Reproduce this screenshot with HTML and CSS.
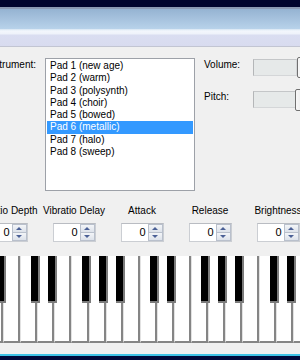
FILE: index.html
```html
<!DOCTYPE html>
<html lang="en">
<head>
    <meta charset="UTF-8">
    <title>Synth Pad</title>
    <link rel="stylesheet" href="styles.css">
</head>
<body>
    <div class="topbar"></div>
    <div class="caption"></div>
    <div class="menubar"></div>

    <div class="panel">
        <div class="top-row">
            <label class="field-label instrument-label">Instrument:</label>
            <ul class="listbox">
                <li>Pad 1 (new age)</li>
                <li>Pad 2 (warm)</li>
                <li>Pad 3 (polysynth)</li>
                <li>Pad 4 (choir)</li>
                <li>Pad 5 (bowed)</li>
                <li class="selected">Pad 6 (metallic)</li>
                <li>Pad 7 (halo)</li>
                <li>Pad 8 (sweep)</li>
            </ul>
            <div class="sliders">
                <div class="slider-row">
                    <span class="field-label">Volume:</span>
                    <div class="track"></div>
                    <div class="thumb"></div>
                </div>
                <div class="slider-row">
                    <span class="field-label">Pitch:</span>
                    <div class="track"></div>
                    <div class="thumb pitch"></div>
                </div>
            </div>
        </div>

        <div class="spin-row">
            <div class="spin-col">
                <span class="spin-label">Vibratio Depth</span>
                <div class="spinbox"><span class="spin-value">0</span><div class="spin-buttons"><span class="spin-up"></span><span class="spin-down"></span></div></div>
            </div>
            <div class="spin-col">
                <span class="spin-label">Vibratio Delay</span>
                <div class="spinbox"><span class="spin-value">0</span><div class="spin-buttons"><span class="spin-up"></span><span class="spin-down"></span></div></div>
            </div>
            <div class="spin-col">
                <span class="spin-label">Attack</span>
                <div class="spinbox"><span class="spin-value">0</span><div class="spin-buttons"><span class="spin-up"></span><span class="spin-down"></span></div></div>
            </div>
            <div class="spin-col">
                <span class="spin-label">Release</span>
                <div class="spinbox"><span class="spin-value">0</span><div class="spin-buttons"><span class="spin-up"></span><span class="spin-down"></span></div></div>
            </div>
            <div class="spin-col">
                <span class="spin-label">Brightness</span>
                <div class="spinbox"><span class="spin-value">0</span><div class="spin-buttons"><span class="spin-up"></span><span class="spin-down"></span></div></div>
            </div>
        </div>

        <!-- A B C D E F G A B C D E F G A B C D E -->
        <div class="keyboard">
            <div class="white-key"><i class="black-key"></i></div>
            <div class="white-key"></div>
            <div class="white-key"><i class="black-key"></i></div>
            <div class="white-key"><i class="black-key"></i></div>
            <div class="white-key"></div>
            <div class="white-key"><i class="black-key"></i></div>
            <div class="white-key"><i class="black-key"></i></div>
            <div class="white-key"><i class="black-key"></i></div>
            <div class="white-key"></div>
            <div class="white-key"><i class="black-key"></i></div>
            <div class="white-key"><i class="black-key"></i></div>
            <div class="white-key"></div>
            <div class="white-key"><i class="black-key"></i></div>
            <div class="white-key"><i class="black-key"></i></div>
            <div class="white-key"><i class="black-key"></i></div>
            <div class="white-key"></div>
            <div class="white-key"><i class="black-key"></i></div>
            <div class="white-key"><i class="black-key"></i></div>
            <div class="white-key"></div>
        </div>
    </div>

    <div class="taskbar"></div>
</body>
</html>
```

FILE: styles.css
```css
*{
    margin: 0;
    padding: 0;
    box-sizing: border-box;
}
html,body{
    width: 300px;
    height: 360px;
    overflow: hidden;
}
body{
    background-color: #f0f0f0;
    font-family: "Liberation Sans", Arial, sans-serif;
    font-size: 10px;
    line-height: 12px;
    color: #000;
}
/* window frame */
.topbar{
    height: 9px;
    background-color: #01052e;
    border-bottom: 2px solid #8b9ab3;
}
.caption{
    height: 20px;
    background: linear-gradient(#95b3d2, #b8d2ea);
}
.menubar{
    height: 18px;
    background: linear-gradient(#d6e4f3 0, #f3f7fc 2px, #eef2fa 5px, #dadef1 6px, #d8dbef 100%);
    border-bottom: 1px solid #c2c5d2;
}
.panel{
    padding-top: 10px;
}
/* instrument + sliders */
.top-row{
    display: flex;
    align-items: flex-start;
    height: 134px;
}
.top-row > *{
    flex: none;
}
.instrument-label{
    width: 59px;
    margin-left: -14px;
    margin-top: 2px;
    white-space: nowrap;
}
.listbox{
    list-style: none;
    width: 150px;
    height: 133px;
    margin-top: 1px;
    padding: 1px;
    background-color: #fff;
    border: 1px solid #9da1a8;
}
.listbox li{
    height: 12.25px;
    line-height: 12.25px;
    padding-left: 3px;
    white-space: nowrap;
}
.listbox li.selected{
    background-color: #3399ff;
    color: #fff;
}
.sliders{
    margin-left: 9px;
    display: flex;
    flex-direction: column;
    gap: 11px;
}
.slider-row{
    display: flex;
    align-items: center;
    height: 21px;
}
.slider-row .field-label{
    width: 49px;
    flex: none;
    align-self: flex-start;
    padding-top: 2px;
}
.track{
    width: 44px;
    height: 17px;
    flex: none;
    background-color: #e6e9e9;
    border: 1px solid #d4d6d8;
    border-left-color: #b4b6b8;
    border-top-color: #c4c6c8;
}
.thumb{
    width: 12px;
    height: 21px;
    flex: none;
    background: linear-gradient(90deg, #f8f8f8, #e4e4e4);
    border: 1px solid #707070;
    border-radius: 2px;
}
.thumb.pitch{
    height: 22px;
    margin-left: -2px;
}
/* spin boxes */
.spin-row{
    display: flex;
    margin-left: -28px;
    margin-top: 14px;
}
.spin-col{
    flex: 0 0 68px;
    display: flex;
    flex-direction: column;
    align-items: center;
    gap: 6px;
}
.spin-label{
    white-space: nowrap;
}
.spinbox{
    display: flex;
    width: 43px;
    height: 19px;
    background-color: #fff;
    border: 1px solid #cbced3;
    border-top-color: #b9bcc2;
}
.spin-value{
    flex: 1;
    text-align: right;
    font-size: 11px;
    line-height: 17px;
    padding-right: 2px;
}
.spin-buttons{
    width: 15px;
    display: flex;
    flex-direction: column;
}
.spin-buttons span{
    flex: 1;
    display: flex;
    align-items: center;
    justify-content: center;
    background: linear-gradient(#f3f5f8, #dde2ea);
    border: 1px solid #b9c0cc;
}
.spin-down{
    border-top: none !important;
}
.spin-up::after,
.spin-down::after{
    content: "";
    border-left: 3px solid transparent;
    border-right: 3px solid transparent;
}
.spin-up::after{
    border-bottom: 3px solid #4b6096;
}
.spin-down::after{
    border-top: 3px solid #4b6096;
}
/* piano */
.keyboard{
    display: flex;
    height: 87px;
    margin-left: -13.76px;
    margin-top: 14px;
}
.white-key{
    position: relative;
    flex: 0 0 17.06px;
    height: 100%;
    background-color: #fff;
    border-left: 1px solid #e2e2e2;
    border-right: 2px solid #858585;
    border-bottom: 2px solid #858585;
}
.black-key{
    position: absolute;
    z-index: 1;
    top: 0;
    right: -4.5px;
    width: 9px;
    height: 47px;
    background-color: #000;
    border-right: 2px solid #7c7c7c;
    border-bottom: 2px solid #7c7c7c;
}
.taskbar{
    height: 6px;
    margin-top: 11px;
    background-color: #01083a;
    border-top: 2px solid #3fc3e6;
}
```
